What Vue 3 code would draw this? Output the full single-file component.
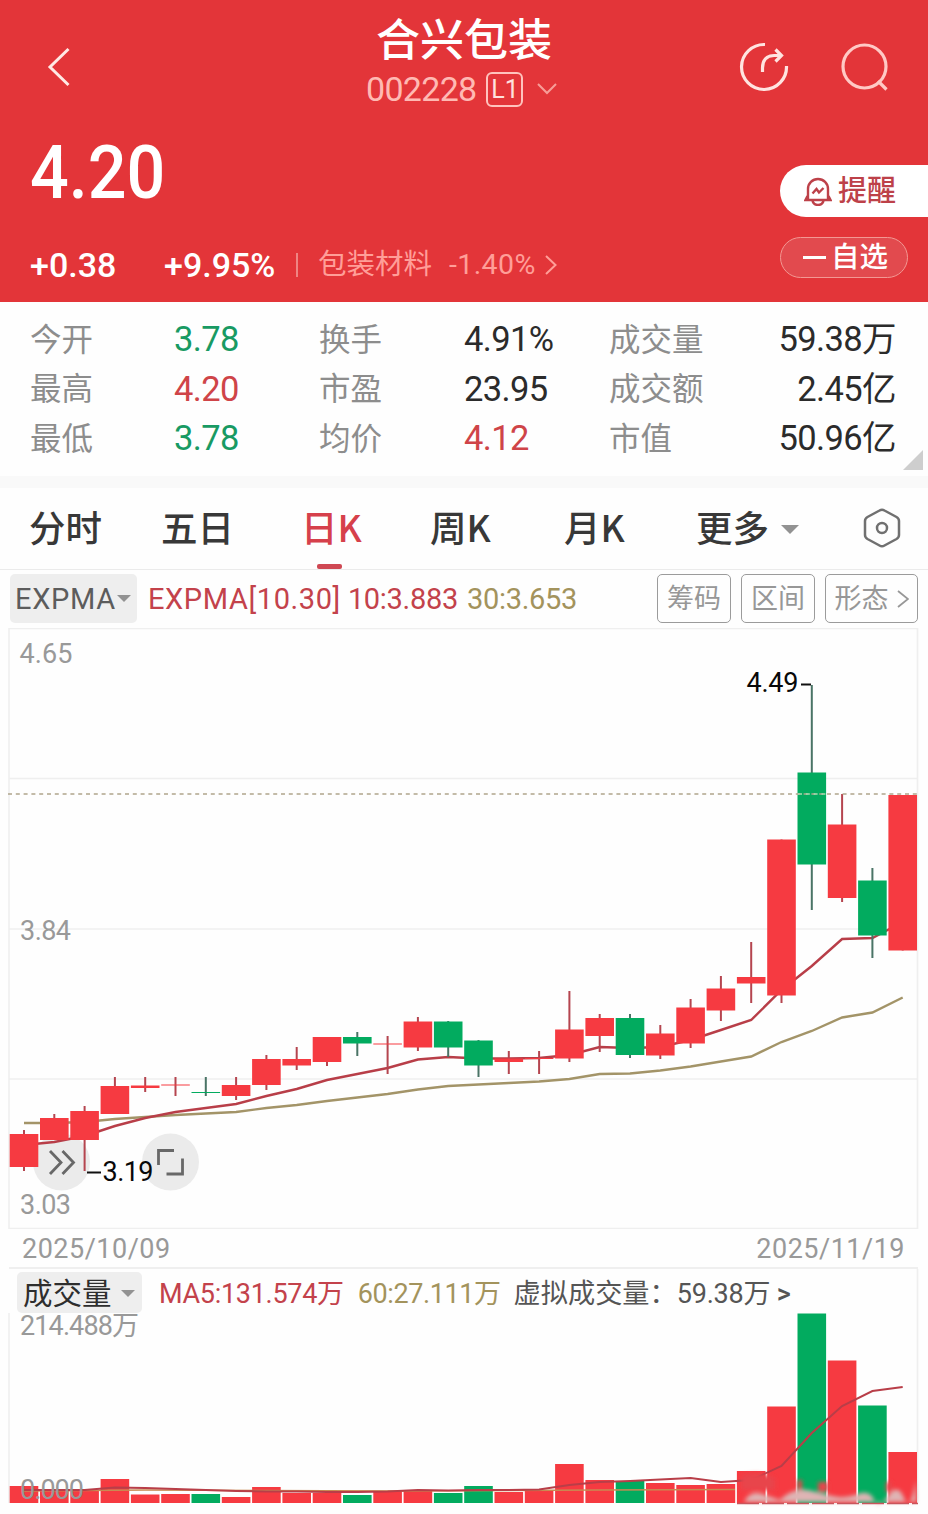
<script setup>
// x centre of the first candle and distance between candles
const startX = 24
const step = 30.3
const barWidth = 28.6

const stats = [
  { label: '今开', value: '3.78', tone: 'down' },
  { label: '换手', value: '4.91%', tone: '' },
  { label: '成交量', value: '59.38万', tone: '' },
  { label: '最高', value: '4.20', tone: 'up' },
  { label: '市盈', value: '23.95', tone: '' },
  { label: '成交额', value: '2.45亿', tone: '' },
  { label: '最低', value: '3.78', tone: 'down' },
  { label: '均价', value: '4.12', tone: 'up' },
  { label: '市值', value: '50.96亿', tone: '' }
]

const tabs = ['分时', '五日', '日K', '周K', '月K']

// [rising, body top, body bottom, high, low, volume top]
const days = [
  [1, 1134, 1167, 1130, 1171, 1486],
  [1, 1118, 1140, 1114, 1140, 1490],
  [1, 1111, 1140, 1106, 1171, 1490],
  [1, 1086, 1114, 1077, 1114, 1479],
  [1, 1085.5, 1088, 1077, 1092, 1494.5],
  [1, 1084.5, 1085.5, 1077, 1096, 1494],
  [0, 1092, 1093, 1077, 1096, 1494],
  [1, 1085, 1096, 1077, 1100, 1497],
  [1, 1059, 1085, 1055, 1090, 1487],
  [1, 1059, 1065.5, 1047, 1070, 1493],
  [1, 1037, 1062, 1037, 1066, 1493],
  [0, 1037, 1043.5, 1032, 1056, 1495],
  [1, 1043.5, 1044.5, 1036, 1074, 1491],
  [1, 1021.5, 1047.5, 1017, 1051, 1491],
  [0, 1021.5, 1047.5, 1021, 1057, 1493],
  [0, 1040.5, 1065.5, 1040, 1077, 1486],
  [1, 1058.5, 1062, 1051, 1074, 1492],
  [1, 1058, 1059, 1051, 1074, 1491],
  [1, 1029.5, 1058.5, 991, 1062, 1464],
  [1, 1018, 1036, 1014, 1052, 1480],
  [0, 1018, 1055, 1014, 1058, 1481],
  [1, 1033.5, 1055.5, 1025, 1059, 1483],
  [1, 1007.5, 1043.5, 999, 1048, 1485],
  [1, 988.5, 1010.5, 976, 1021, 1484],
  [1, 977, 983.5, 942, 1003, 1471],
  [1, 839.5, 995.5, 839.5, 1003, 1406.5],
  [0, 772.5, 864.5, 685, 910, 1313.5],
  [1, 824.5, 898, 794, 902, 1360.5],
  [0, 880.5, 935.5, 868, 958, 1405.5],
  [1, 795, 950.5, 795, 950.5, 1452]
].map(([rising, top, bottom, high, low, vol], i) => ({
  rising: rising === 1, top, bottom, high, low, vol, x: startX + i * step
}))

const toPoints = (ys) => ys.map((y, i) => `${(startX + i * step).toFixed(1)},${y}`).join(' ')

const exp10 = toPoints([
  1145, 1142, 1136, 1126, 1118, 1112, 1108, 1104, 1096, 1089,
  1080, 1074, 1068, 1059.5, 1057, 1058.5, 1058.5, 1058, 1055, 1047,
  1048, 1047, 1040, 1030, 1020, 990, 966, 939, 938, 922
])
const exp30 = toPoints([
  1123, 1123, 1122, 1119, 1117, 1115, 1113.5, 1112, 1108, 1105,
  1101, 1097.5, 1094, 1089.5, 1086, 1084.5, 1083, 1081.5, 1079, 1074,
  1073.5, 1070.5, 1066.5, 1061.5, 1056.5, 1042, 1031, 1017.5, 1012.5, 997.5
])
const volMa5 = toPoints([
  1490, 1490, 1490, 1487.5, 1488, 1489, 1490, 1491, 1491.5, 1491.5,
  1492, 1492, 1491.5, 1490, 1490.5, 1490, 1490, 1489.5, 1485, 1482,
  1481, 1479.5, 1478, 1482, 1480, 1466, 1433, 1406, 1391, 1387
])
</script>

<template>
  <div class="page">
    <header class="quote">
      <div class="nav">
        <svg class="back" viewBox="0 0 24 42"><path d="M21.500 3 3 21 21.500 39" /></svg>
        <div class="title">
          <h1>合兴包装</h1>
          <div class="code">
            <span>002228</span>
            <span class="level">L1</span>
            <svg class="chev-down" viewBox="0 0 20 12"><path d="M1 1l9 9 9-9" /></svg>
          </div>
        </div>
        <svg class="share" viewBox="0 0 52 52">
          <path d="M27 3.500A22.500 22.500 0 1 0 48.500 25" />
          <path d="M24.500 31V27Q24.500 15 36 14.500H42M37.500 8.500l6 6-6 6" />
        </svg>
        <svg class="search" viewBox="0 0 52 52">
          <circle cx="24.500" cy="25.500" r="21.500" />
          <path d="M38 40l8.500 8.500" />
        </svg>
      </div>
      <div class="price-row">
        <div class="price">4.20</div>
        <div class="remind">
          <svg viewBox="0 0 28 30">
            <path d="M4 23.500V13a10 10 0 0 1 20 0V23.500M3.500 20L1.500 24H26.500L24.500 20M8.500 25q1.500 4 5.500 4t5.500-4" />
            <path d="M8.500 17.500l4-4.500 2.500 3.500 4.500-4.500" />
          </svg>
          <span>提醒</span>
        </div>
      </div>
      <div class="change-row">
        <span class="diff">+0.38</span>
        <span class="pct">+9.95%</span>
        <i class="sep"></i>
        <span class="sector">包装材料</span>
        <span class="sector-pct">-1.40%</span>
        <svg class="chev" viewBox="0 0 12 20"><path d="M1 1l9.500 9L1 19" /></svg>
        <div class="fav"><i></i><span>自选</span></div>
      </div>
    </header>

    <section class="stats">
      <template v-for="s in stats" :key="s.label">
        <span class="label">{{ s.label }}</span>
        <span :class="['value', s.tone]">{{ s.value }}</span>
      </template>
      <i class="corner"></i>
    </section>

    <nav class="tabs">
      <span v-for="t in tabs" :key="t" :class="['tab', { active: t === '日K' }]">{{ t }}</span>
      <span class="tab more">更多<i class="caret"></i></span>
      <svg class="setting" viewBox="0 0 38 40">
        <path d="M16.500 2.500Q19 1 21.500 2.500L33.500 9Q36 10.500 36 13V27Q36 29.500 33.500 31L21.500 37.500Q19 39 16.500 37.500L4.500 31Q2 29.500 2 27V13Q2 10.500 4.500 9Z" />
        <circle cx="19" cy="20" r="5" />
      </svg>
    </nav>

    <div class="indicator">
      <span class="pick">EXPMA<i class="caret small"></i></span>
      <span class="exp">EXPMA[10.30]</span>
      <span class="exp ten">10:3.883</span>
      <span class="exp gold">30:3.653</span>
      <span class="btn first">筹码</span>
      <span class="btn">区间</span>
      <span class="btn wide">形态<svg viewBox="0 0 12 20"><path d="M1 2l10 8-10 8" /></svg></span>
    </div>

    <!-- Daily candles -->
    <div class="chart">
      <svg viewBox="0 628 928 601" width="928" height="601">
        <path class="grid" d="M9 628.500H918M9 778.500H918M9 929H918M9 1079H918M9 1228.500H918M9 628V1229M917.500 628V1229" />
        <circle class="float" cx="61.500" cy="1162" r="28.500" />
        <circle class="float" cx="170.500" cy="1162" r="28.500" />
        <polyline class="line gold-line" :points="exp30" />
        <polyline class="line red-line" :points="exp10" />
        <g v-for="(d, i) in days" :key="i" :class="d.rising ? 'rise' : 'fall'">
          <rect class="wick" :x="d.x - 1" :y="d.high" width="2" :height="d.low - d.high" />
          <rect :x="d.x - barWidth / 2" :y="d.top" :width="barWidth" :height="d.bottom - d.top" />
        </g>
        <path class="last" d="M8 794H918" />
        <path class="last-over" d="M798 794H826" />
        <path class="glyph" d="M50 1151l11 11.500-11 11.500M62.500 1151l11 11.500-11 11.500" />
        <path class="glyph" d="M158.500 1165V1150.500H174M182.500 1158.500V1174H166.500" />
        <path class="mark" d="M801 684.500H811M87 1172.500H101" />
        <text class="mark-text" x="746.500" y="692" textLength="52">4.49</text>
        <text class="mark-text" x="102.500" y="1181" textLength="51">3.19</text>
        <text class="axis" x="19.500" y="663" textLength="53">4.65</text>
        <text class="axis" x="20" y="940" textLength="51">3.84</text>
        <text class="axis" x="20" y="1214" textLength="51">3.03</text>
      </svg>
    </div>

    <div class="dates"><span>2025/10/09</span><span>2025/11/19</span></div>

    <div class="vol-head">
      <span class="pick">成交量<i class="caret small"></i></span>
      <span class="ma5">MA5:131.574万</span>
      <span class="ma60">60:27.111万</span>
      <span class="virtual">虚拟成交量：</span>
      <span class="virtual-value">59.38万 <b>&gt;</b></span>
    </div>

    <!-- Volume -->
    <div class="chart">
      <svg class="volume" viewBox="0 1313 928 201" width="928" height="201">
        <defs>
          <filter id="soft" x="-20%" y="-40%" width="140%" height="180%"><feGaussianBlur stdDeviation="2.200" /></filter>
        </defs>
        <path class="grid" d="M9 1313V1503M917.500 1269V1503" />
        <g v-for="(d, i) in days" :key="i" :class="d.rising ? 'rise' : 'fall'">
          <rect :x="d.x - barWidth / 2" :y="d.vol" :width="barWidth" :height="1503 - d.vol" />
        </g>
        <polyline class="line gold-line thin" points="24,1491 145,1490 400,1491 600,1490 735,1489.500" />
        <polyline class="line red-line vol-line" :points="volMa5" />
        <g filter="url(#soft)">
          <path class="smear-red" d="M741 1476Q757 1470 775 1478V1490H741ZM797 1480H802V1494H797ZM818 1482H828V1492H818ZM886 1482H892V1492H886Z" />
          <path class="smear-light" d="M744 1502Q750 1490 762 1494T780 1500Q794 1486 812 1491T838 1497T858 1494T874 1500T888 1496T904 1498T916 1480V1502H744Z" />
        </g>
        <path class="cut" d="M737 1503.500H918" />
        <text class="axis" x="20" y="1335" textLength="119">214.488万</text>
        <text class="axis" x="20" y="1499" textLength="64">0.000</text>
      </svg>
    </div>
  </div>
</template>

<style>
body {
  margin: 0;
  background: #fefefe;
}
</style>

<style scoped>
.page {
  width: 928px;
  height: 1514px;
  overflow: hidden;
  background: #fefefe;
  font-family: Roboto, "Noto Sans CJK SC", sans-serif;
  line-height: 1.2;
  color: #2b2b2b;
}

svg {
  display: block;
  flex: none;
  fill: none;
}

span {
  white-space: nowrap;
}

/* === HEADER === */
.quote {
  height: 302px;
  box-sizing: border-box;
  background: #e33539;
  color: #fff;
}

.nav {
  display: grid;
  grid-template-columns: 366px 372px 102px 88px;
  height: 134px;
}

.back {
  width: 24px;
  height: 42px;
  margin: 46px 0 0 47px;
  stroke: #ffe9e5;
  stroke-width: 3;
}

.title h1 {
  margin: 12px 0 0;
  padding-left: 10px;
  font-size: 44px;
  line-height: 58px;
  font-weight: 500;
  white-space: nowrap;
}

.code {
  display: flex;
  align-items: center;
  height: 38px;
  font-size: 34px;
  letter-spacing: -0.7px;
  color: #ffb9b3;
}

.level {
  width: 33px;
  height: 31px;
  margin-left: 10px;
  border: 2px solid #ffc3bd;
  border-radius: 6px;
  font-size: 25px;
  line-height: 32px;
  letter-spacing: 0;
  text-align: center;
  color: #ffe1de;
}

.chev-down {
  width: 20px;
  height: 12px;
  margin-left: 14px;
  stroke: #f79d98;
  stroke-width: 2;
}

.share,
.search {
  width: 52px;
  height: 52px;
  margin-top: 41px;
  stroke: #ffe4e0;
  stroke-width: 3.2;
}

.search {
  stroke: #ffc9c5;
}

.price-row {
  display: flex;
  justify-content: space-between;
  height: 96px;
}

.price {
  width: 160px;
  height: 76px;
  padding-left: 30px;
  font-size: 75px;
  line-height: 76px;
  font-weight: 500;
  transform: scaleX(0.91);
  transform-origin: 30px 0;
}

.remind {
  display: flex;
  align-items: center;
  box-sizing: border-box;
  width: 148px;
  height: 52px;
  margin-top: 31px;
  padding-left: 24px;
  border-radius: 26px 0 0 26px;
  background: #fff;
  color: #bd4149;
  font-size: 29px;
  font-weight: 500;
}

.remind svg {
  width: 28px;
  height: 30px;
  margin-right: 6px;
  stroke: #bd4149;
  stroke-width: 2.4;
}

.change-row {
  display: flex;
  align-items: center;
  height: 70px;
  padding-left: 30px;
  font-size: 34px;
}

.diff {
  width: 134px;
  font-weight: 500;
}

.pct {
  width: 132px;
  font-weight: 500;
}

.sep {
  width: 2px;
  height: 24px;
  margin-right: 20px;
  background: #ef8583;
}

.sector,
.sector-pct {
  font-size: 28.500px;
  color: #ff9e98;
}

.sector {
  padding-top: 1px;
}

.sector-pct {
  margin-left: 17px;
  letter-spacing: 0.4px;
}

.chev {
  width: 12px;
  height: 20px;
  margin-left: 9px;
  stroke: #ff9e98;
  stroke-width: 2;
}

.fav {
  display: flex;
  align-items: center;
  box-sizing: border-box;
  width: 128px;
  height: 41px;
  margin: -16px 20px 0 auto;
  padding-left: 22px;
  border: 1.5px solid #f39893;
  border-radius: 21px;
  background: #e24a4e;
  font-size: 28.500px;
  font-weight: 500;
}

.fav span {
  padding-top: 2px;
}

.fav i {
  width: 23px;
  height: 3px;
  margin-right: 5px;
  background: #fff;
}

/* === STATS === */
.stats {
  position: relative;
  display: grid;
  grid-template-columns: 144px 145px 145px 145px 129px 158px;
  grid-auto-rows: 49.500px;
  align-items: center;
  height: 174px;
  box-sizing: border-box;
  padding: 13px 0 0 30px;
  font-size: 34.500px;
}

.label {
  padding-top: 2px;
  font-size: 31.500px;
  color: #8d8d8d;
}

.value {
  letter-spacing: -0.6px;
}

.value:nth-child(6n) {
  text-align: right;
}

.up {
  color: #cf4448;
}

.down {
  color: #189a63;
}

.corner {
  position: absolute;
  right: 5px;
  bottom: 6px;
  border-bottom: 20px solid #cecece;
  border-left: 20px solid transparent;
}

/* === TABS === */
.tabs {
  display: grid;
  grid-template-columns: 132px 140px 129px 134px 131px 167px 38px;
  align-items: center;
  height: 94px;
  box-sizing: border-box;
  padding: 0 30px 12px;
  border-top: 12px solid #f9f9f9;
  border-bottom: 1px solid #ebebeb;
  font-size: 36.500px;
}

.tab {
  position: relative;
  top: 4px;
  left: -1px;
  font-family: "Noto Sans CJK SC", sans-serif;
  font-weight: 500;
  color: #383838;
}

.tab.more {
  left: 0;
}

.tab.active {
  color: #d6404b;
}

.tab.active::after {
  content: "";
  position: absolute;
  left: 16px;
  bottom: -21px;
  width: 25px;
  height: 5px;
  border-radius: 2px;
  background: #cf4853;
}

.caret {
  display: inline-block;
  margin-left: 12px;
  border: 9px solid transparent;
  border-top-color: #929292;
  border-bottom: 0;
  vertical-align: 8px;
}

.caret.small {
  border-width: 7px;
  border-bottom: 0;
  vertical-align: 7px;
}

.setting {
  width: 38px;
  height: 40px;
  margin-top: 11px;
  stroke: #707070;
  stroke-width: 2.5;
}

/* === INDICATOR BAR === */
.indicator {
  display: flex;
  align-items: center;
  height: 58px;
  box-sizing: border-box;
  padding: 0 10px 2px;
  font-size: 29px;
}

.pick {
  box-sizing: border-box;
  width: 127px;
  height: 49px;
  padding-left: 5px;
  border-radius: 5px;
  background: #eee;
  line-height: 51px;
  letter-spacing: 0.7px;
  color: #5c5c5c;
}

.indicator .pick .caret {
  margin-left: 1px;
}

.exp {
  margin-left: 11px;
  padding-top: 2px;
  letter-spacing: 0.6px;
  color: #c3424b;
}

.exp.ten {
  margin-left: 7px;
  letter-spacing: -0.3px;
}

.exp.gold {
  margin-left: 9px;
  letter-spacing: -0.3px;
  color: #a3935c;
}

.btn {
  display: flex;
  align-items: center;
  justify-content: center;
  box-sizing: border-box;
  width: 74px;
  height: 49px;
  margin-left: 10px;
  padding-top: 3px;
  border: 1.5px solid #9b9b9b;
  border-radius: 5px;
  font-size: 27px;
  color: #979797;
}

.btn.first {
  margin-left: auto;
}

.btn.wide {
  width: 93px;
}

.btn svg {
  width: 12px;
  height: 20px;
  margin: -2px 0 0 8px;
  stroke: #979797;
  stroke-width: 1.8;
}

/* === CHARTS === */
.volume {
  overflow: visible;
}

.grid {
  stroke: #efefef;
  stroke-width: 1.6;
}

.float {
  fill: #ebebeb;
}

.line {
  stroke-width: 2.4;
}

.gold-line {
  stroke: #a39468;
}

.gold-line.thin {
  stroke: #c98a52;
  stroke-width: 1.6;
}

.red-line {
  stroke: #b83e48;
}

.vol-line {
  stroke-width: 2;
}

.rise {
  fill: #f63a41;
}

.fall {
  fill: #02ab5f;
}

.rise .wick {
  fill: #b5454f;
}

.fall .wick {
  fill: #4a7466;
}

.last {
  stroke: #b0a58c;
  stroke-width: 1.6;
  stroke-dasharray: 4 3.8;
}

.last-over {
  stroke: #a9dcb0;
  stroke-width: 1.6;
  stroke-dasharray: 4 3.8;
}

.glyph {
  stroke: #686868;
  stroke-width: 2.8;
}

.mark {
  stroke: #111;
  stroke-width: 2.2;
}

.mark-text {
  fill: #080808;
  font-size: 27px;
}

.axis {
  fill: #999;
  font-size: 27px;
}

.smear-red {
  fill: #e8444c;
}

.smear-light {
  fill: #dfb4b4;
}

.cut {
  stroke: #c9555c;
  stroke-width: 1.5;
  stroke-dasharray: 22 3;
}

.dates {
  display: flex;
  justify-content: space-between;
  align-items: center;
  height: 40px;
  margin: 0 10px 0 9px;
  box-sizing: border-box;
  padding: 2px 13px 0;
  border-bottom: 2px solid #efefef;
  font-size: 27px;
  letter-spacing: 0.5px;
  color: #999;
}

.vol-head {
  display: flex;
  align-items: center;
  box-sizing: border-box;
  height: 44px;
  padding: 3px 0 0 17px;
  font-size: 27px;
}

.vol-head .pick {
  width: 125px;
  height: 41px;
  padding-left: 6px;
  font-size: 29.500px;
  line-height: 44px;
  letter-spacing: 0;
  color: #2e2e2e;
}

.vol-head .pick .caret {
  margin-left: 9px;
}

.ma5,
.ma60,
.virtual,
.virtual-value {
  padding-top: 4px;
}

.ma5 {
  margin-left: 17px;
  letter-spacing: -0.3px;
  color: #c3424b;
}

.ma60 {
  margin-left: 14px;
  letter-spacing: -0.4px;
  color: #a3935c;
}

.virtual {
  margin-left: 13px;
  font-size: 27.200px;
  color: #555;
}

.virtual-value {
  letter-spacing: -0.2px;
  color: #555;
}

.virtual-value b {
  font-weight: 500;
}
</style>
